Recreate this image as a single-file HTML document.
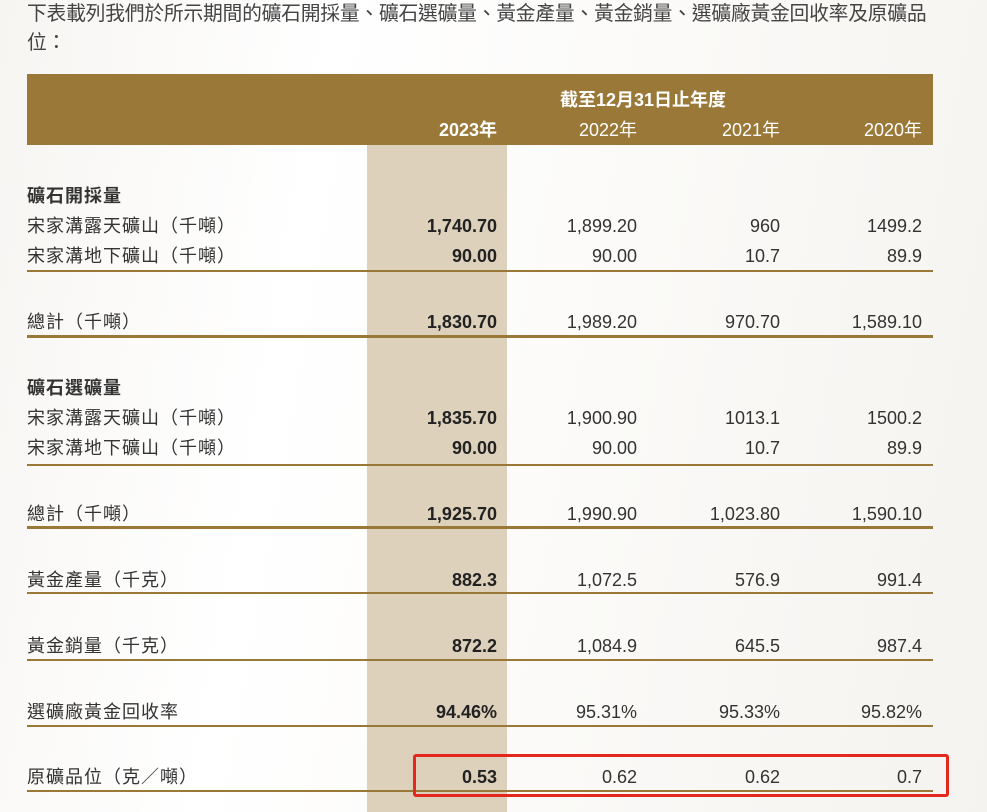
<!DOCTYPE html>
<html><head><meta charset="utf-8"><style>
body{margin:0;width:987px;height:812px;overflow:hidden;background:linear-gradient(100deg,#f7f5f2 0%,#fff 30%,#fbfaf8 60%,#f5f3ef 100%);font-family:"Liberation Sans","Noto Sans CJK TC",sans-serif;color:#333;position:relative}
.a{position:absolute;white-space:nowrap}
.t{left:27px;font-size:20px;line-height:28px;color:#444;letter-spacing:-0.25px;transform:scaleX(0.99);transform-origin:left}
.hdr{left:27px;top:74px;width:906px;height:71px;background:#9a7838}
.col{left:367px;top:145px;width:140px;height:667px;background:#ddd1bc}
.r{font-size:18px;line-height:20px;text-align:right;width:200px}
.c1{left:297px;font-weight:bold;color:#222}.c2{left:437px}.c3{left:580px}.c4{left:722px}
.l{left:27px;font-size:18px;line-height:20px;letter-spacing:1px}
.b{font-weight:bold}
.ln{left:27px;width:906px;background:#9a7838;height:2px}
.th{height:3px}
.w{color:#fff}
</style></head><body>
<div class="a t" style="top:0px">下表載列我們於所示期間的礦石開採量、礦石選礦量、黃金產量、黃金銷量、選礦廠黃金回收率及原礦品</div>
<div class="a t" style="top:29px">位：</div>
<div class="a hdr"></div>
<div class="a col"></div>
<div class="a w b" style="left:560px;top:86px;font-size:18px">截至12月31日止年度</div>
<div class="a r c1 w" style="top:120px;color:#fff">2023年</div>
<div class="a r c2 w" style="top:120px">2022年</div>
<div class="a r c3 w" style="top:120px">2021年</div>
<div class="a r c4 w" style="top:120px">2020年</div>

<div class="a l b" style="top:186px">礦石開採量</div>
<div class="a l" style="top:216px">宋家溝露天礦山（千噸）</div>
<div class="a r c1" style="top:216px">1,740.70</div><div class="a r c2" style="top:216px">1,899.20</div><div class="a r c3" style="top:216px">960</div><div class="a r c4" style="top:216px">1499.2</div>
<div class="a l" style="top:246px">宋家溝地下礦山（千噸）</div>
<div class="a r c1" style="top:246px">90.00</div><div class="a r c2" style="top:246px">90.00</div><div class="a r c3" style="top:246px">10.7</div><div class="a r c4" style="top:246px">89.9</div>
<div class="a ln" style="top:270px"></div>
<div class="a l" style="top:312px">總計（千噸）</div>
<div class="a r c1" style="top:312px">1,830.70</div><div class="a r c2" style="top:312px">1,989.20</div><div class="a r c3" style="top:312px">970.70</div><div class="a r c4" style="top:312px">1,589.10</div>
<div class="a ln th" style="top:335px"></div>

<div class="a l b" style="top:378px">礦石選礦量</div>
<div class="a l" style="top:408px">宋家溝露天礦山（千噸）</div>
<div class="a r c1" style="top:408px">1,835.70</div><div class="a r c2" style="top:408px">1,900.90</div><div class="a r c3" style="top:408px">1013.1</div><div class="a r c4" style="top:408px">1500.2</div>
<div class="a l" style="top:438px">宋家溝地下礦山（千噸）</div>
<div class="a r c1" style="top:438px">90.00</div><div class="a r c2" style="top:438px">90.00</div><div class="a r c3" style="top:438px">10.7</div><div class="a r c4" style="top:438px">89.9</div>
<div class="a ln" style="top:464px"></div>
<div class="a l" style="top:504px">總計（千噸）</div>
<div class="a r c1" style="top:504px">1,925.70</div><div class="a r c2" style="top:504px">1,990.90</div><div class="a r c3" style="top:504px">1,023.80</div><div class="a r c4" style="top:504px">1,590.10</div>
<div class="a ln th" style="top:526px"></div>

<div class="a l" style="top:570px">黃金產量（千克）</div>
<div class="a r c1" style="top:570px">882.3</div><div class="a r c2" style="top:570px">1,072.5</div><div class="a r c3" style="top:570px">576.9</div><div class="a r c4" style="top:570px">991.4</div>
<div class="a ln" style="top:592px"></div>
<div class="a l" style="top:636px">黃金銷量（千克）</div>
<div class="a r c1" style="top:636px">872.2</div><div class="a r c2" style="top:636px">1,084.9</div><div class="a r c3" style="top:636px">645.5</div><div class="a r c4" style="top:636px">987.4</div>
<div class="a ln" style="top:659px"></div>
<div class="a l" style="top:702px">選礦廠黃金回收率</div>
<div class="a r c1" style="top:702px">94.46%</div><div class="a r c2" style="top:702px">95.31%</div><div class="a r c3" style="top:702px">95.33%</div><div class="a r c4" style="top:702px">95.82%</div>
<div class="a ln" style="top:725px"></div>
<div class="a l" style="top:767px">原礦品位（克／噸）</div>
<div class="a r c1" style="top:767px">0.53</div><div class="a r c2" style="top:767px">0.62</div><div class="a r c3" style="top:767px">0.62</div><div class="a r c4" style="top:767px">0.7</div>
<div class="a ln" style="top:790px"></div>
<div class="a" style="left:413px;top:754px;width:530px;height:37px;border:3px solid #e5281e;border-radius:3px"></div>
</body></html>
